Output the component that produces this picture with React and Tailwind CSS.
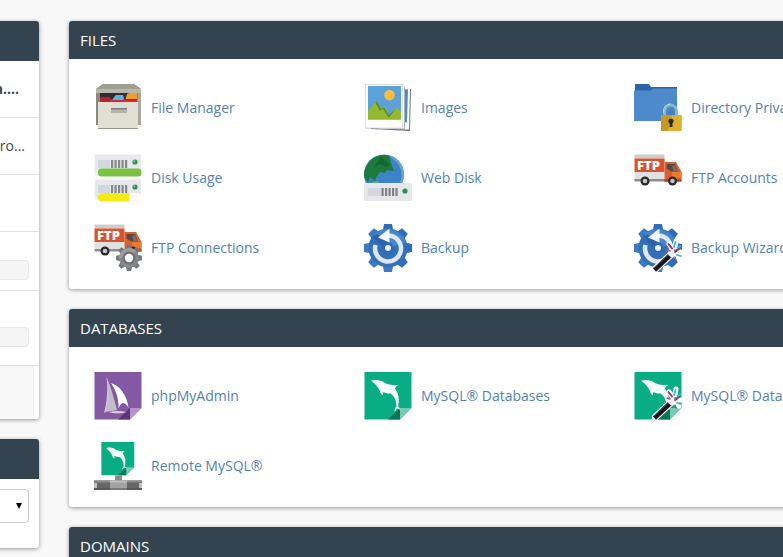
import { useState } from "react";

const Server = ({ y }) => (
  <g transform={`translate(0 ${y})`}>
    <rect x="1" y="0.5" width="46" height="17" rx="1" fill="#e6e8eb" />
    <rect x="4" y="6" width="12" height="8" fill="#d3d8e0" />
    {[17, 20.5, 24, 27.5, 31].map((x) => (
      <rect key={x} x={x} y="6" width="2.2" height="8" fill="#85888c" />
    ))}
    <circle cx="41" cy="8" r="2.6" fill="#2f8f5c" />
    <circle cx="40.3" cy="7.3" r="1" fill="#7cc49a" />
  </g>
);

const FileManagerIcon = () => (
  <>
    <path d="M9 0h31l7 5v36H2V5z" fill="#8b887f" />
    <path d="M9 0h31l7 5H2z" fill="#a09d93" />
    <path d="M2 5h45v4H2z" fill="#b9b6ab" />
    <path d="M44 9h3v32h-3z" fill="#aaa79d" />
    <path d="M6 9h37v9H6z" fill="#2f2d2d" />
    <path d="M33 10l2-1h8v8H31z" fill="#f29a2e" />
    <path d="M6 13h9l2 2h26v3H6z" fill="#b7202e" />
    <path d="M18 17l2-4 2-2h7l1 3-1 3z" fill="#59b3e6" />
    <path d="M16 16h27v2H16z" fill="#d8283a" />
    <path d="M4 18h40v27H4z" fill="#e1dfd3" />
    <path d="M4 44h40v1H4z" fill="#99968c" />
    <path d="M17 24h16v5H17z" fill="#b5b4ad" />
    <path d="M17 24h16v1.5H17z" fill="#7f7e78" />
  </>
);

const DiskUsageIcon = () => (
  <>
    <rect x="0.5" y="3" width="46" height="19" fill="#eef0f1" />
    <Server y={0} />
    <rect x="4" y="14.5" width="43.5" height="8" rx="3.5" fill="#7bc143" />
    <rect x="0.5" y="29" width="46" height="17" fill="#eef0f1" />
    <Server y={25} />
    <rect x="4" y="39" width="43.5" height="8.5" rx="3.5" fill="#fafafa" />
    <path d="M8 39h27.5v8.5H8a4 4 0 0 1 0-8.5z" fill="#f5ea14" />
  </>
);

const ImagesIcon = () => (
  <>
    <path d="M8 3l39 2-1 42-39-2z" fill="#6e7680" />
    <path d="M8 2l38 2.5-1 41L7 44z" fill="#fff" />
    <path d="M40 5l4 .5-1 33-3-.5z" fill="#4d8dc4" />
    <path d="M38 2.5h3V45l-25-.5z" fill="#a9b0b7" />
    <path d="M38 1h2v43.5H15z" fill="#fff" />
    <path d="M1 0h37.5v44.5H1z" fill="#b9bec2" />
    <path d="M1.500 .5H38v43.300H1.500z" fill="#fff" />
    <path d="M4 2h33v33.500H4z" fill="#5ba2da" />
    <circle cx="25.500" cy="11" r="5.300" fill="#f8bd3d" />
    <path d="M4 26l3-2 5-8 2 3 3 6 3-3 3 4 2 5 3-3 4-5 5 5v7.500H4z" fill="#94b832" />
    <path d="M11 18l2-1 4 8 3-2 5 8 7-7-7 10-6-9-3 2z" fill="#5e8f2c" />
  </>
);

const WebDiskIcon = () => (
  <>
    <circle cx="20" cy="20.500" r="20" fill="#3d83c8" />
    <path d="M24 1a20 20 0 0 1 15 26l-4 3c6-10 2-21-11-29z" fill="#66a5dc" />
    <path d="M3 11C8 3 17-1 25 2l2 7 3 8-7-1-2 3-5-1-4 6-1 3-5-4-2 5-3-3C-1 20 1 15 3 11z" fill="#1c7a3a" />
    <path d="M17 2l6 7 4 1-4 3-8-3-5 4z" fill="#12692f" />
    <path d="M8 28l7-1-2 3H9z" fill="#6fae8b" />
    <rect x="0" y="29" width="48" height="18" rx="1.500" fill="#e5e7e9" />
    <rect x="4" y="34" width="13" height="8" fill="#d3d8e0" />
    {[17.5, 21, 24.5, 28, 31.5].map((x) => (
      <rect key={x} x={x} y="34" width="2.200" height="8" fill="#808388" />
    ))}
    <circle cx="41" cy="37" r="2.600" fill="#2f8f5c" />
  </>
);

const Truck = () => (
  <>
    <path d="M.5 .5h30v4H.5z" fill="#cfcdcc" />
    <path d="M.5 4.500h30v13.500H.5z" fill="#d9532c" />
    <path d="M.5 18h30v7H.5z" fill="#e0e1e3" />
    <path d="M.5 25h32v2.500H.5z" fill="#8e8d90" />
    <path d="M30.500 8H42l5.500 10v9.500h-17z" fill="#d9602e" />
    <path d="M38 18h9.500v6H38z" fill="#ed7a2e" />
    <path d="M32.500 10H41l3 7.500h-7l-4.500-3z" fill="#594a47" />
    <path d="M38 12l3-1 2.500 6h-4z" fill="#7d6a64" />
    <path d="M30.500 25.500h17v2h-17z" fill="#a43d1f" />
    {[11, 38.5].map((cx) => (
      <g key={cx}>
        <circle cx={cx} cy="27" r="4.500" fill="#29292b" />
        <circle cx={cx} cy="27" r="2.300" fill="#c3c4c7" />
      </g>
    ))}
    <text x="3" y="16" fontFamily="Open Sans" fontWeight="800" fontSize="13" fill="#fff">
      FTP
    </text>
  </>
);

const teeth = [0, 45, 90, 135, 180, 225, 270, 315];

const Gear = () => (
  <g transform="translate(35 34)">
    {teeth.map((a) => (
      <path key={a} d="M-2.200-13h4.400l1 5h-6.400z" transform={`rotate(${a})`} fill="#77797d" />
    ))}
    <circle r="10" fill="#85878b" />
    <path d="M-10 0A10 10 0 0 1 7-7L0 0z" fill="#9b9da1" />
    <circle r="6.500" fill="#6f7175" />
    <circle r="4.200" fill="#fff" />
  </g>
);

const BackupIcon = () => (
  <>
    {teeth.map((a) => (
      <path
        key={a}
        d="M20 0h8l1.500 8h-11z"
        transform={`rotate(${a} 24 24)`}
        fill={a < 180 ? "#2f6db8" : "#3a7bc4"}
      />
    ))}
    <circle cx="24" cy="24" r="19.500" fill="#3470b8" />
    <path d="M10 10.500a19.500 19.500 0 0 1 32 8L24 24z" fill="#4686cc" />
    <path d="M9.500 13l4-3L27 22l-5 5z" fill="#2a63ab" />
    <path d="M11.500 21A13 13 0 1 0 25 11.500" fill="none" stroke="#dfe7f5" strokeWidth="4.500" />
    <path d="M14 13.500L25.500 4.500v14z" fill="#f4f7fc" />
    <circle cx="24" cy="24" r="5.500" fill="#2f69b2" />
    <circle cx="24" cy="24" r="3" fill="#e9f0fa" />
  </>
);

const Wand = () => (
  <g strokeLinecap="round">
    <path d="M21.500 45L38 29.500" stroke="#fff" strokeWidth="7" />
    <path d="M35 20l3 4M42 17l-1 6M44 28h3M42 32l3 2" stroke="#fff" strokeWidth="5" />
    <path d="M20.500 46L36 31.500" stroke="#19171a" strokeWidth="4.500" strokeLinecap="butt" />
    <path d="M20.500 43.500L33.500 31" stroke="#6b686c" strokeWidth="1" />
    <path d="M35.500 32l4-4" stroke="#ececef" strokeWidth="4.500" strokeLinecap="butt" />
    <path d="M34.500 20l3.500 4.500M41 28l4-3" stroke="#bd2466" strokeWidth="2" />
    <path d="M41.500 18l-1.500 5M43 31l4 1M46.500 22l-3 2" stroke="#35b9cf" strokeWidth="1.800" />
    <path d="M36 27l-3-1M41 33l1 3" stroke="#a0569b" strokeWidth="1.400" />
  </g>
);

const DirectoryIcon = () => (
  <>
    <path d="M1 0h14l2 3h26v8H1z" fill="#2c64a8" />
    <path d="M0 6.500h17l2-2h24V37H0z" fill="#4c8acb" />
    <path d="M43 18v19H26z" fill="#4180c2" />
    <path d="M30.500 32v-5a6 6 0 0 1 12 0v5" fill="none" stroke="#86b7ca" strokeWidth="3" />
    <path d="M29.500 29v-2a7 7 0 0 1 7-7" fill="none" stroke="#b8d5dd" strokeWidth="1" />
    <rect x="27" y="31" width="20.500" height="16" rx="1" fill="#c69a22" />
    <path d="M38 31h9.500v16H34z" fill="#dfb02d" />
    <circle cx="37" cy="37" r="2.600" fill="#2f2a20" />
    <path d="M36 37h2l.7 6h-3.200z" fill="#2f2a20" />
  </>
);

const Fold = ({ base, dark, light }) => (
  <>
    <path d="M.5 0h47v36L36 47.500H.5z" fill={base} />
    <path d="M24 47.500L36 36v11.500z" fill={dark} />
    <path d="M36 36h11.500L36 47.500z" fill={light} />
  </>
);

const Dolphin = () => (
  <path
    d="M7 8.500c2 .2 3-.5 5-.5 3 0 6 .8 9 3 2.500 1 4 1.500 6 1.700 2.500.8 4.500.3 7.500.3-2 .8-2.500 2.300-3.700 3.200 2.700 3.300 4.200 7.800 4 12.300l-.6 6.500c1.500.8 2 1.600 2.300 2.800l-3.500-1.200-2.200 3.200c-.6-2 .2-4 1.600-5.300 0-6-1.800-10-5.800-13-2.500.2-4.600-.2-7.100-1.500-.5 1.300-.8 2.500-.4 3.500-2-1-3-3-3.600-5.400-1-2.500-2.500-4-4.500-6.100z"
    fill="#f5fffc"
  />
);

const MysqlIcon = () => (
  <>
    <Fold base="#08ad83" dark="#087657" light="#78cbb2" />
    <Dolphin />
  </>
);

const icons = {
  files: <FileManagerIcon />,
  disk: <DiskUsageIcon />,
  images: <ImagesIcon />,
  webdisk: <WebDiskIcon />,
  directory: <DirectoryIcon />,
  ftp: <Truck />,
  ftpConn: (
    <>
      <Truck />
      <Gear />
    </>
  ),
  backup: <BackupIcon />,
  wizard: (
    <>
      <BackupIcon />
      <Wand />
    </>
  ),
  pma: (
    <>
      <Fold base="#8459a3" dark="#5c3579" light="#b893cb" />
      <path d="M12.500 5c4 9 4.500 22 2.500 33l-5 3c3-10 4-24 2.500-36z" fill="#cbc6d1" />
      <path d="M13 6c4 9 8 24 10 32-3 .5-7 1-11 2 3-11 3-23 1-34z" fill="#c3bdc9" />
      <path d="M17 11c9 3 16 12 17.500 25-1.500-3.500-3.500-5-5.500-5-2 .2-3.500 2.500-4.500 5.500C25 27 22 18 17 11z" fill="#fff" />
      <path d="M14.500 40c5-1 11-1.500 18 0-3 1.500-13 2-18 0z" fill="#d9d0df" />
    </>
  ),
  mysql: <MysqlIcon />,
  mysqlWizard: (
    <>
      <MysqlIcon />
      <Wand />
    </>
  ),
  remote: (
    <>
      <g transform="translate(7 0) scale(.7)">
        <MysqlIcon />
      </g>
      <path d="M21 33.500h7v6h-7z" fill="#8a8a8a" />
      <path d="M0 38.500h48V48H0z" fill="#666" />
      <path d="M0 38.500h48v2H0z" fill="#898989" />
      <path d="M16 38.500h17V48H16z" fill="#a2a2a2" />
      <path d="M16 38.500h17v2H16zM0 41h3v5H0zM45 41h3v5h-3z" fill="#c0c0c0" />
      <path d="M0 46h48v2H0z" fill="#4d4d4d" opacity=".5" />
    </>
  ),
};

const panels = [
  {
    title: "FILES",
    items: [
      ["files", "File Manager"],
      ["images", "Images"],
      ["directory", "Directory Privacy"],
      ["disk", "Disk Usage"],
      ["webdisk", "Web Disk"],
      ["ftp", "FTP Accounts"],
      ["ftpConn", "FTP Connections"],
      ["backup", "Backup"],
      ["wizard", "Backup Wizard"],
    ],
  },
  {
    title: "DATABASES",
    items: [
      ["pma", "phpMyAdmin"],
      ["mysql", "MySQL® Databases"],
      ["mysqlWizard", "MySQL® Database Wizard"],
      ["remote", "Remote MySQL®"],
    ],
  },
  { title: "DOMAINS", items: [] },
];

const card = "rounded-[3px] bg-white shadow-[0_1px_4px_rgba(0,0,0,0.4)]";

function Panel({ title, items }) {
  return (
    <section className={card}>
      <h2 className="flex h-[38px] items-center rounded-t-[3px] bg-[#33434f] px-[11px] pt-[2px] text-[15px] text-white">
        {title}
      </h2>
      <ul className="grid grid-cols-[repeat(3,270px)] gap-y-[22px] px-[25px] pt-[25px] pb-[17px]">
        {items.map(([icon, label]) => (
          <li key={label}>
            <a href="#" className="flex items-center gap-[9px] text-sm whitespace-nowrap text-[#5582ae]">
              <svg viewBox="0 0 48 48" className="size-12 shrink-0" aria-hidden="true">
                {icons[icon]}
              </svg>
              {label}
            </a>
          </li>
        ))}
      </ul>
    </section>
  );
}

function Bar({ label }) {
  return (
    <div
      role="progressbar"
      aria-label={label}
      aria-valuenow={0}
      className="h-5 rounded border border-[#e9e9e9] bg-[#f5f5f5]"
    />
  );
}

export default function App() {
  const [theme, setTheme] = useState("");

  return (
    <div className="flex h-screen items-start gap-[30px] overflow-hidden bg-[#f8f8f8] pt-[21px] font-['Open_Sans',sans-serif] text-sm text-[#444]">
      <aside className="-ml-[171px] flex w-[210px] shrink-0 flex-col gap-5">
        <section className={card}>
          <div className="h-10 rounded-t-[3px] bg-[#33434f]" />
          <div className="flex h-[57px] items-center justify-end border-b border-[#e2e2e2] pr-5 font-bold">m....</div>
          <div className="flex h-[57px] items-center justify-end border-b border-[#e2e2e2] pr-[14px]">ro...</div>
          <div className="h-[57px] border-b border-[#e2e2e2]" />
          <div className="border-b border-[#e2e2e2] px-[10px] pt-7 pb-[10px]">
            <Bar label="Disk" />
          </div>
          <div className="border-b border-[#e2e2e2] px-[10px] pt-9 pb-[18px]">
            <Bar label="Bandwidth" />
          </div>
          <div className="mr-[5px] h-[53px] rounded-bl-[3px] border-r border-[#f0f0f0] bg-[#f8f8f8]" />
        </section>

        <section className={card}>
          <div className="h-10 rounded-t-[3px] bg-[#33434f]" />
          <div className="relative px-[10px] pt-[10px] pb-[25px]">
            <select
              aria-label="Theme"
              value={theme}
              onChange={(e) => setTheme(e.target.value)}
              className="block h-[34px] w-full appearance-none rounded border border-[#ccc] bg-white"
            >
              <option value=""></option>
            </select>
            <svg viewBox="0 0 6 6" className="pointer-events-none absolute top-6 right-[17px] size-[6px]" aria-hidden="true">
              <path d="M0 0h6L3 6z" fill="#000" />
            </svg>
          </div>
        </section>
      </aside>

      <main className="flex shrink-0 flex-col gap-5">
        {panels.map((p) => (
          <Panel key={p.title} {...p} />
        ))}
      </main>
    </div>
  );
}
